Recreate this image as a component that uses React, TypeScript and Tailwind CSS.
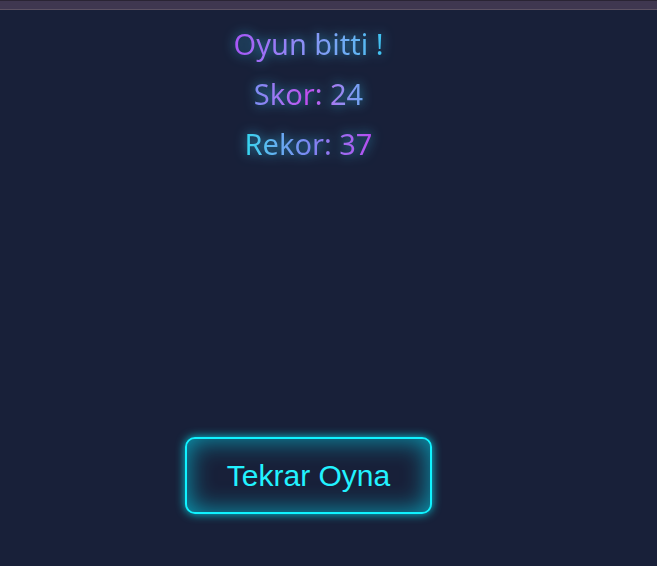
import React from 'react';

const App = () => {
  return (
    <div className="w-[657px] h-[566px] bg-[#182039] overflow-hidden flex flex-col">
      <div className="h-[10px] shrink-0 bg-[#3f3750] border-t border-t-[#2a2434] border-b border-b-[#5b5162]"></div>

      <div className="w-[617px] flex flex-col items-center pt-[9px]" style={{ fontFamily: '"Noto Sans", "Open Sans", sans-serif' }}>
        <div className="h-[50px] flex items-center text-[29px] bg-gradient-to-r from-[#a855f7] to-[#3cc4f2] bg-clip-text text-transparent drop-shadow-[0_0_6px_rgba(56,200,248,0.7)]">
          Oyun bitti !
        </div>
        <div className="h-[50px] flex items-center text-[29px] bg-gradient-to-r from-[#7a8ef4] via-[#c04cf0] to-[#6aa6f2] bg-clip-text text-transparent drop-shadow-[0_0_6px_rgba(56,200,248,0.7)]">
          Skor: 24
        </div>
        <div className="h-[50px] flex items-center text-[29px] bg-gradient-to-r from-[#2ed6ee] via-[#7a86f2] to-[#b64cf0] bg-clip-text text-transparent drop-shadow-[0_0_6px_rgba(56,200,248,0.7)]">
          Rekor: 37
        </div>

        <button
          className="mt-[268px] w-[247px] h-[77px] rounded-[10px] border-2 border-[#10f2ff] bg-[#182039] shadow-[0_0_10px_rgba(0,240,255,0.8),inset_0_0_26px_rgba(0,230,255,0.65)] text-[#22f2ff] text-[30px] flex items-center justify-center"
          style={{ fontFamily: '"Liberation Sans", Arial, sans-serif' }}
        >
          Tekrar Oyna
        </button>
      </div>
    </div>
  );
};

export default App;
